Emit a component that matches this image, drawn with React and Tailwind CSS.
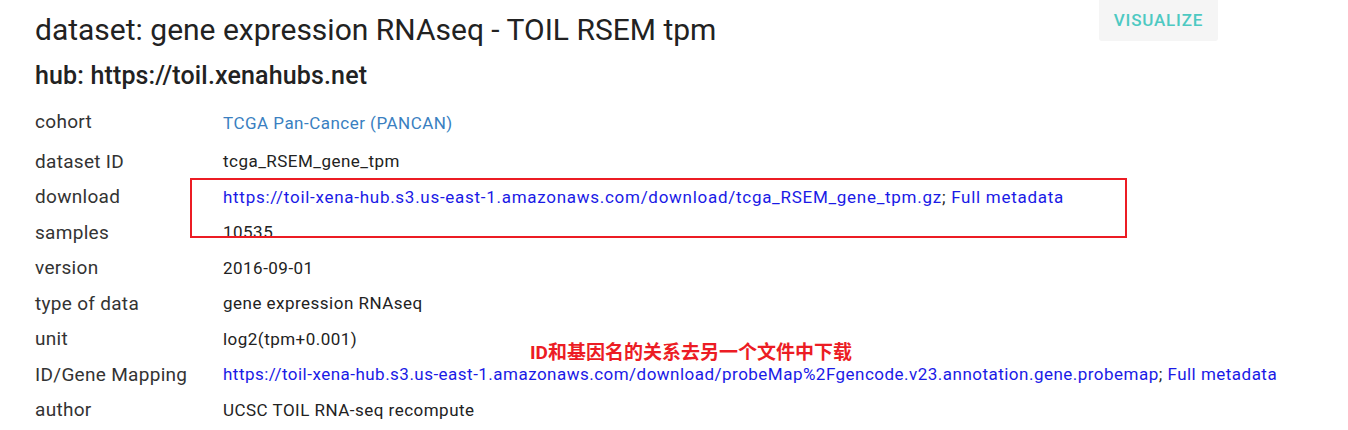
import React from "react";

const rows = [
  { label: "cohort", value: "TCGA Pan-Cancer (PANCAN)", kind: "cohort", h: "h-[40px]" },
  { label: "dataset ID", value: "tcga_RSEM_gene_tpm" },
  {
    label: "download",
    value: "https://toil-xena-hub.s3.us-east-1.amazonaws.com/download/tcga_RSEM_gene_tpm.gz",
    kind: "link",
    wide: true,
  },
  { label: "samples", value: "10535" },
  { label: "version", value: "2016-09-01" },
  { label: "type of data", value: "gene expression RNAseq" },
  { label: "unit", value: "log2(tpm+0.001)" },
  {
    label: "ID/Gene Mapping",
    value:
      "https://toil-xena-hub.s3.us-east-1.amazonaws.com/download/probeMap%2Fgencode.v23.annotation.gene.probemap",
    kind: "link",
  },
  { label: "author", value: "UCSC TOIL RNA-seq recompute" },
];

const App = () => {
  return (
    <div
      className="relative w-[1348px] h-[430px] overflow-hidden bg-white text-[#222]"
      style={{ fontFamily: "Roboto, 'Noto Sans CJK SC', sans-serif" }}
    >
      <div className="pl-[35px]">
        {/* Header */}
        <div className="flex w-[1183px] items-start justify-between">
          <h1 className="mt-[12px] text-[30px] leading-[36px] font-normal text-[#222]">
            dataset: gene expression RNAseq - TOIL RSEM tpm
          </h1>
          <button className="h-[41px] w-[119px] rounded-b-[3px] bg-[#f5f5f5] text-[17px] font-medium tracking-[0.8px] text-[#4dc9c2]">
            VISUALIZE
          </button>
        </div>
        <h2 className="mt-[13px] text-[25px] leading-[30px] font-medium tracking-[0.15px] text-[#222]">
          hub: https://toil.xenahubs.net
        </h2>

        {/* Table */}
        <div className="mt-[13px]">
          {rows.map((r) => (
            <div key={r.label} className={`flex items-center ${r.h || "h-[35.5px]"}`}>
              <div
                className={`w-[188px] text-[19px] tracking-[0.3px] text-[#333] ${
                  r.kind === "cohort" ? "-mt-[3px]" : ""
                }`}
              >
                {r.label}
              </div>
              <div className={`text-[17px] ${r.wide ? "tracking-[0.72px]" : "tracking-[0.48px]"}`}>
                {r.kind === "cohort" && <span className="text-[#3a7fc1]">{r.value}</span>}
                {r.kind === "link" && (
                  <span className="text-[#1a1ae6]">
                    {r.value}
                    <span className="text-[#222]">; </span>
                    Full metadata
                  </span>
                )}
                {!r.kind && <span>{r.value}</span>}
              </div>
            </div>
          ))}
        </div>
      </div>

      {/* annotations */}
      <div className="absolute left-[190px] top-[178px] h-[60px] w-[937px] border-2 border-[#ec1c24]" />
      <div className="absolute left-[530px] top-[342px] text-[19px] leading-[22px] font-bold text-[#ec1c24]">
        ID和基因名的关系去另一个文件中下载
      </div>
    </div>
  );
};

export default App;
